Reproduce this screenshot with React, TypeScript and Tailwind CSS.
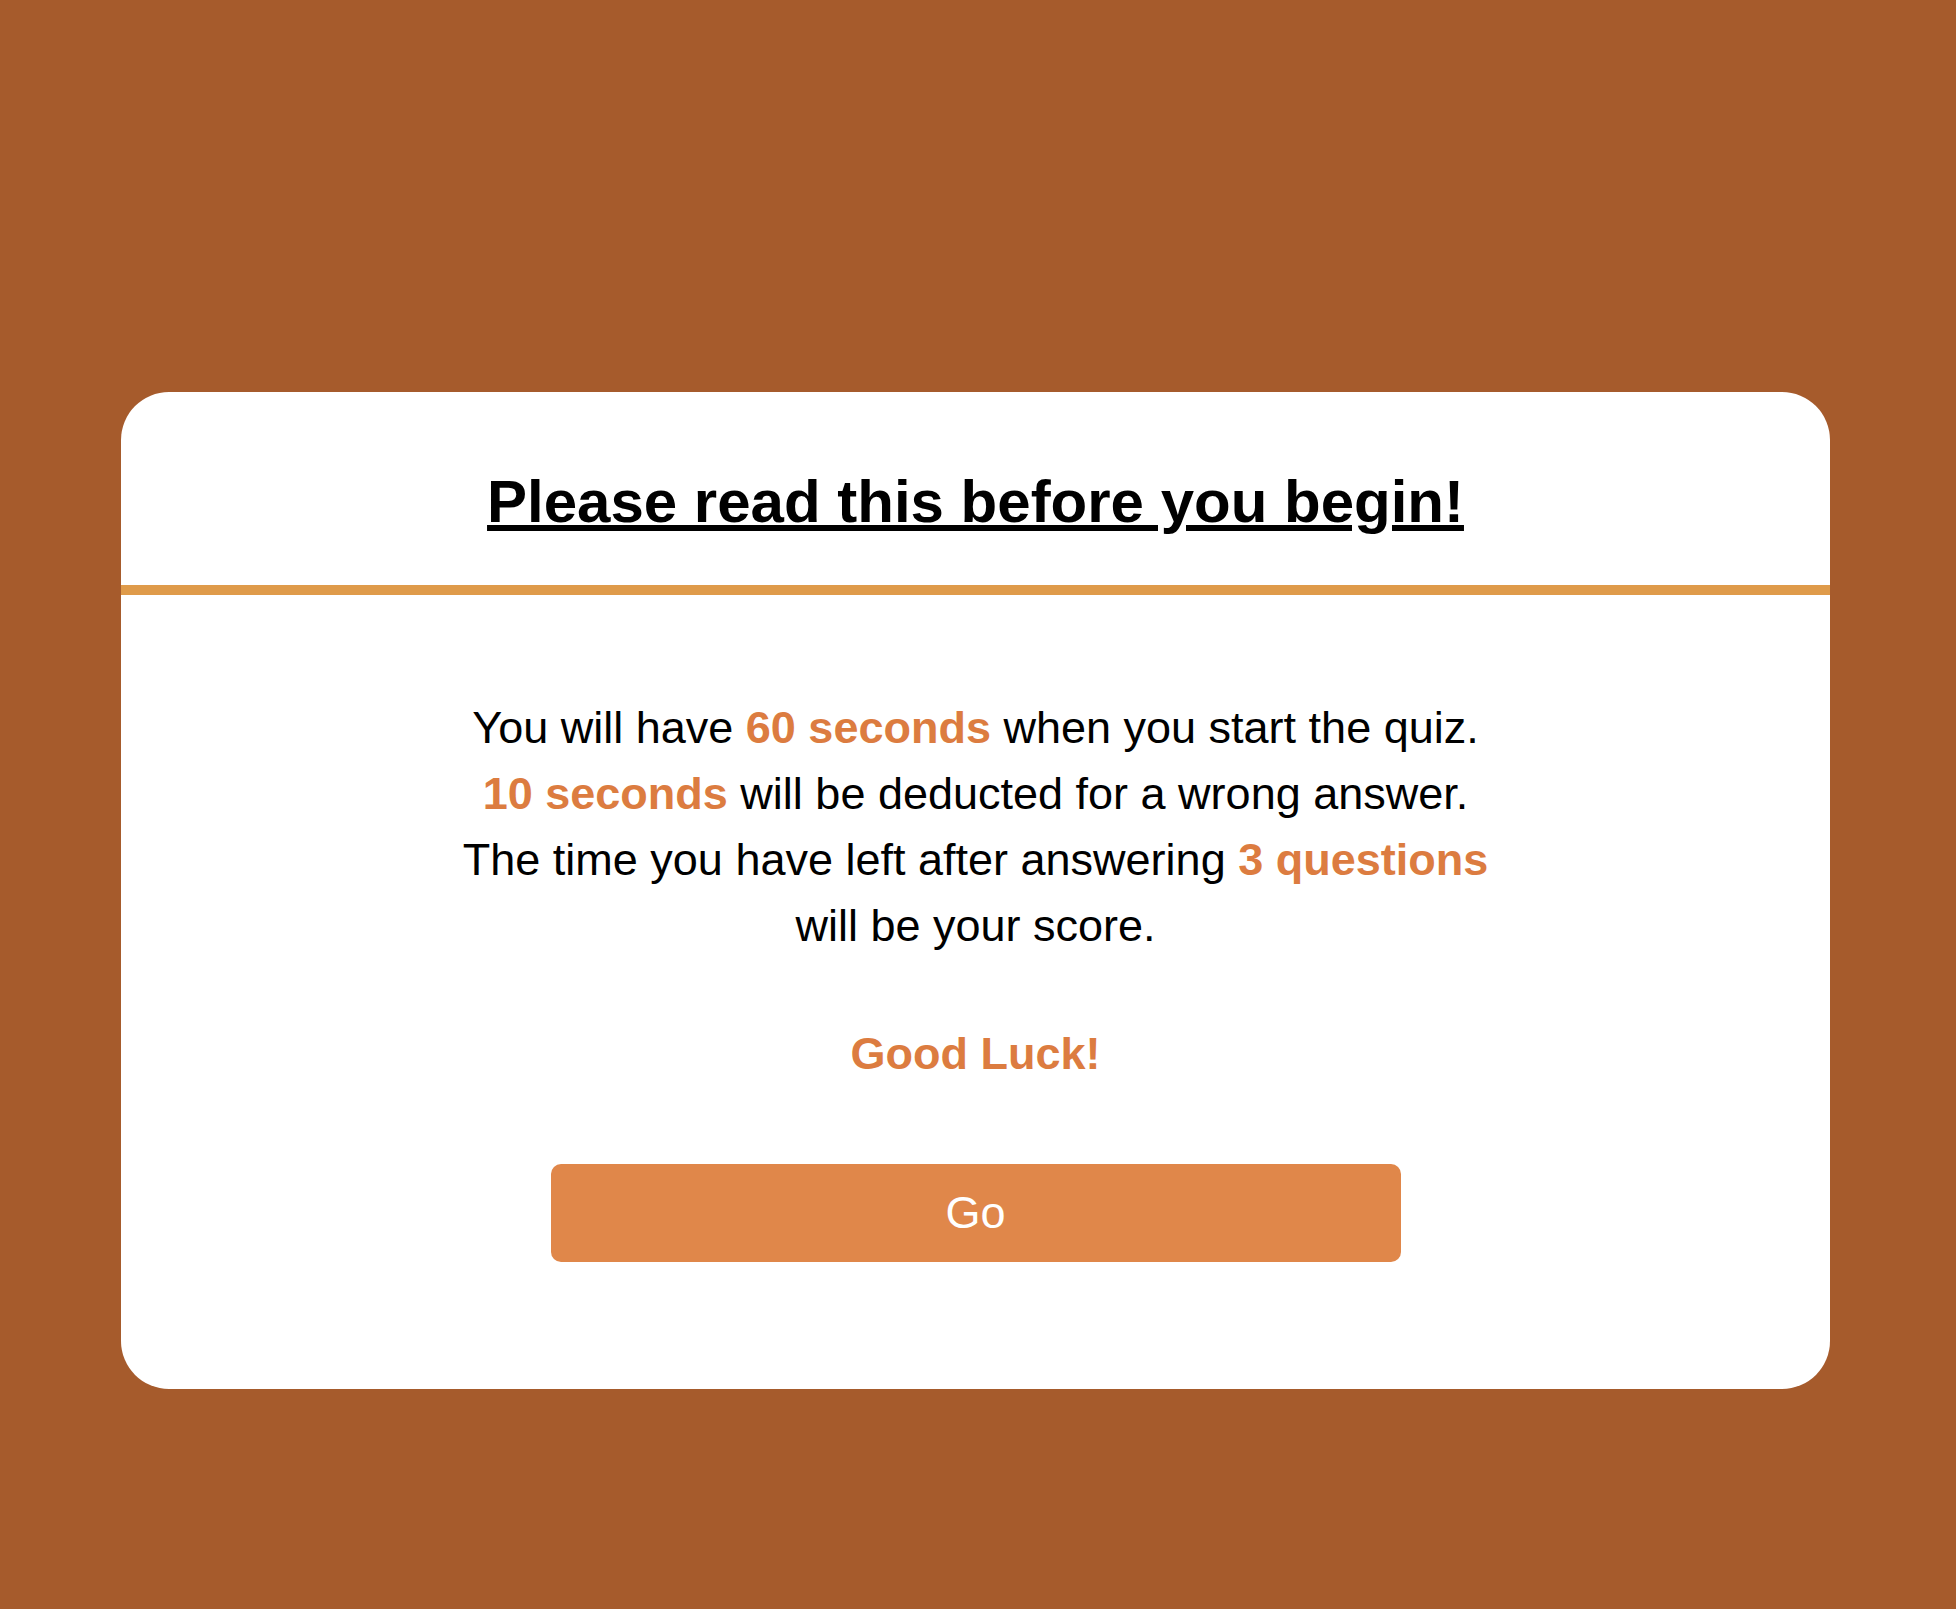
const highlight = "font-bold text-[#dc7c40]";

const QuizIntro = () => {
  return (
    <div className="min-h-[1609px] bg-[#a65b2c] pt-[392px] font-['Liberation_Sans',Arial,sans-serif]">
      <div className="ml-[121px] w-[1709px] rounded-[48px] bg-white">
        <div className="pt-[75px] pb-[49px] text-center">
          <h1 className="text-[60px] leading-[69px] font-bold text-black underline">
            Please read this before you begin!
          </h1>
        </div>
        <div className="h-[10px] bg-[#df9b4a]" />
        <div className="flex flex-col items-center pt-[100px] pb-[127px]">
          <p className="text-center text-[45px] leading-[66px] text-black">
            You will have <span className={highlight}>60 seconds</span> when you start the quiz.
            <br />
            <span className={highlight}>10 seconds</span> will be deducted for a wrong answer.
            <br />
            The time you have left after answering <span className={highlight}>3 questions</span>
            <br />
            will be your score.
          </p>
          <p className="mt-[62px] text-[45px] leading-[66px] font-bold text-[#dc7c40]">Good Luck!</p>
          <button className="mt-[77px] h-[98px] w-[850px] rounded-[10px] bg-[#e0874a] text-[45px] text-white">
            Go
          </button>
        </div>
      </div>
    </div>
  );
};

export default function App() {
  return <QuizIntro />;
}
